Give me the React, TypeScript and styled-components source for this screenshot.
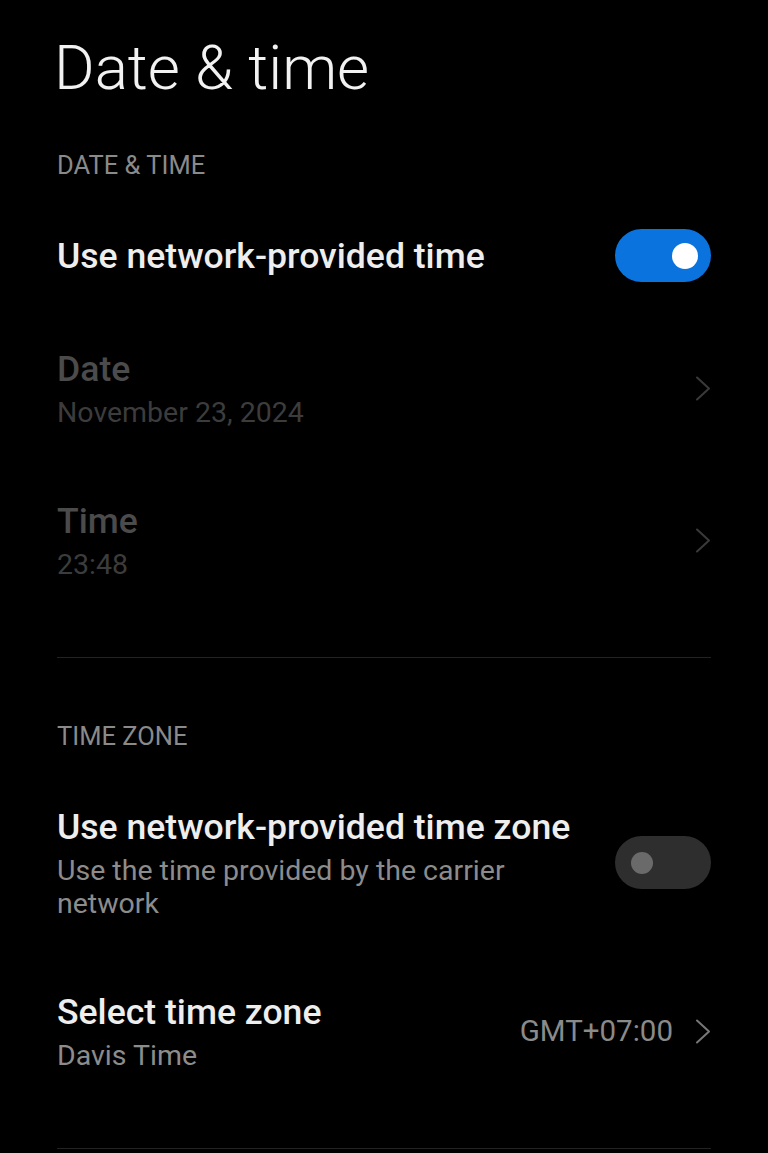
import React from 'react';
import styled, { createGlobalStyle } from 'styled-components';

const GlobalStyle = createGlobalStyle`
  html, body {
    margin: 0;
    padding: 0;
    background: #000;
  }
  body {
    font-family: Roboto, "Noto Sans", "Liberation Sans", sans-serif;
    -webkit-font-smoothing: antialiased;
  }
`;

const Screen = styled.main`
  min-height: 1153px;
  background: #000;
  padding: 31px 57px 0;
  box-sizing: border-box;
  color: #eee;
`;

const PageTitle = styled.h1`
  margin: 0 0 0 -3px;
  font-size: 62px;
  line-height: 74px;
  font-weight: 300;
  color: #f2f2f2;
`;

const Section = styled.section<{ $first?: boolean }>`
  padding-bottom: 41px;
  border-bottom: 1px solid #232323;
  margin-top: ${p => (p.$first ? '44px' : '62px')};
`;

const SectionHeader = styled.h2`
  margin: 0 0 18px;
  font-size: 25.5px;
  line-height: 32px;
  font-weight: 400;
  color: #8a8a8a;
`;

const Row = styled.div<{ $compact?: boolean }>`
  display: flex;
  align-items: center;
  gap: 40px;
  padding: ${p => (p.$compact ? '30px 0' : '35px 0')};
`;

const TextCol = styled.div`
  flex: 1;
  min-width: 0;
  display: flex;
  flex-direction: column;
  gap: 5px;
`;

const Label = styled.div<{ $disabled?: boolean }>`
  font-size: 35.6px;
  line-height: 44px;
  font-weight: 500;
  color: ${p => (p.$disabled ? '#4b4b4b' : '#eeeeee')};
`;

const Summary = styled.div<{ $disabled?: boolean }>`
  font-size: 28.5px;
  line-height: 33px;
  font-weight: 400;
  color: ${p => (p.$disabled ? '#3c3c3c' : '#8c8c8c')};
  max-width: 490px;
`;

const Trailing = styled.div`
  display: flex;
  align-items: center;
  gap: 22px;
  flex-shrink: 0;
`;

const Value = styled.span`
  font-size: 29.5px;
  line-height: 33px;
  color: #8a8a8a;
`;

const Track = styled.div<{ $on: boolean }>`
  width: 96px;
  height: 53px;
  border-radius: 27px;
  background: ${p => (p.$on ? '#0b73de' : '#2e2e2e')};
  display: flex;
  align-items: center;
  justify-content: ${p => (p.$on ? 'flex-end' : 'flex-start')};
  padding: 0 13px 0 16px;
  box-sizing: border-box;
  flex-shrink: 0;
`;

const Knob = styled.div<{ $on: boolean }>`
  width: ${p => (p.$on ? '26px' : '22px')};
  height: ${p => (p.$on ? '26px' : '22px')};
  border-radius: 50%;
  background: ${p => (p.$on ? '#ffffff' : '#6a6a6a')};
`;

const Toggle = ({ on }: { on: boolean }) => (
  <Track $on={on}>
    <Knob $on={on} />
  </Track>
);

const Chevron = ({ dim }: { dim?: boolean }) => (
  <svg width="16" height="25" viewBox="0 0 16 25" fill="none">
    <polyline
      points="2,1.5 14,12.5 2,23.5"
      stroke={dim ? '#3a3a3a' : '#777777'}
      strokeWidth="2"
      strokeLinecap="round"
      strokeLinejoin="round"
    />
  </svg>
);

export default function App() {
  return (
    <>
      <GlobalStyle />
      <Screen>
        <PageTitle>Date &amp; time</PageTitle>

        <Section $first>
          <SectionHeader>DATE &amp; TIME</SectionHeader>
          <Row $compact>
            <TextCol>
              <Label>Use network-provided time</Label>
            </TextCol>
            <Toggle on />
          </Row>
          <Row>
            <TextCol>
              <Label $disabled>Date</Label>
              <Summary $disabled>November 23, 2024</Summary>
            </TextCol>
            <Trailing>
              <Chevron dim />
            </Trailing>
          </Row>
          <Row>
            <TextCol>
              <Label $disabled>Time</Label>
              <Summary $disabled>23:48</Summary>
            </TextCol>
            <Trailing>
              <Chevron dim />
            </Trailing>
          </Row>
        </Section>

        <Section>
          <SectionHeader>TIME ZONE</SectionHeader>
          <Row>
            <TextCol>
              <Label>Use network-provided time zone</Label>
              <Summary>Use the time provided by the carrier network</Summary>
            </TextCol>
            <Toggle on={false} />
          </Row>
          <Row>
            <TextCol>
              <Label>Select time zone</Label>
              <Summary>Davis Time</Summary>
            </TextCol>
            <Trailing>
              <Value>GMT+07:00</Value>
              <Chevron />
            </Trailing>
          </Row>
        </Section>
      </Screen>
    </>
  );
}
